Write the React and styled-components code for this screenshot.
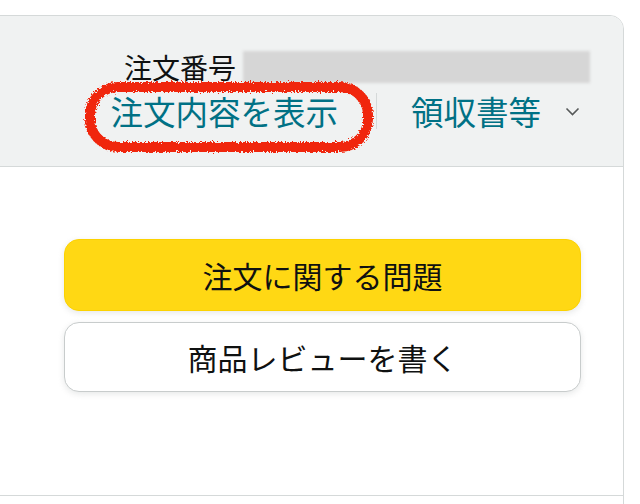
import React from "react";
import styled, { createGlobalStyle } from "styled-components";

const GlobalStyle = createGlobalStyle`
  body {
    margin: 0;
    background: #fff;
    font-family: "Noto Sans CJK JP", "Noto Sans", sans-serif;
    color: #0f1111;
  }
`;

const Page = styled.div`
  height: 504px;
  padding-top: 15px;
  box-sizing: border-box;
  overflow: hidden;
`;

const Card = styled.div`
  margin-left: -20px;
  width: 644px;
  box-sizing: border-box;
  border: 1px solid #d5d9d9;
  border-radius: 14px;
  overflow: hidden;
  background: #fff;
`;

const Header = styled.div`
  display: flex;
  flex-direction: column;
  align-items: flex-end;
  height: 151px;
  padding: 34px 33px 0 0;
  box-sizing: border-box;
  background: #f0f2f2;
  border-bottom: 1px solid #d5d9d9;
`;

const OrderRow = styled.div`
  display: flex;
  align-items: center;
  gap: 7px;
  height: 34px;
`;

const OrderLabel = styled.span`
  font-size: 28px;
  line-height: 34px;
  color: #0f1111;
`;

const Redacted = styled.div`
  width: 347px;
  height: 32px;
  background: #d6d6d6;
  filter: blur(1.5px);
`;

const LinkRow = styled.div`
  display: flex;
  align-items: center;
  height: 40px;
  margin-top: 7px;
  margin-right: 10px;
`;

const LinkWrap = styled.span`
  position: relative;
  display: inline-flex;
`;

const HeaderLink = styled.a`
  font-size: 32.5px;
  line-height: 40px;
  color: #007185;
  text-decoration: none;
  cursor: pointer;
`;

const Scribble = styled.svg`
  position: absolute;
  left: -25px;
  top: -9px;
  width: 290px;
  height: 72px;
  overflow: visible;
  pointer-events: none;
`;

const Divider = styled.span`
  width: 1px;
  height: 36px;
  background: #d5d9d9;
  margin: 0 34px 0 38px;
`;

const Chevron = styled.svg`
  width: 15px;
  height: 9px;
  margin-left: 24px;
`;

const Body = styled.div`
  display: flex;
  flex-direction: column;
  gap: 11px;
  height: 329px;
  padding: 72px 42px 0 83px;
  box-sizing: border-box;
  border-bottom: 1px solid #d5d9d9;
`;

const Button = styled.button`
  display: flex;
  align-items: center;
  justify-content: center;
  height: ${(p) => (p.$primary ? "72px" : "70px")};
  border-radius: 15px;
  border: 1px solid ${(p) => (p.$primary ? "#fcd200" : "#c8cccc")};
  background: ${(p) => (p.$primary ? "#ffd814" : "#fff")};
  box-shadow: 0 2px 6px rgba(213, 217, 217, 0.6);
  font-family: inherit;
  font-size: 30px;
  color: #0f1111;
  cursor: pointer;
`;

const NextSection = styled.div`
  height: 40px;
`;

export default function App() {
  return (
    <>
      <GlobalStyle />
      <Page>
        <Card>
          <Header>
            <OrderRow>
              <OrderLabel>注文番号</OrderLabel>
              <Redacted />
            </OrderRow>
            <LinkRow>
              <LinkWrap>
                <HeaderLink>注文内容を表示</HeaderLink>
                <Scribble viewBox="0 0 290 72">
                  <defs>
                    <filter id="rough" x="-10%" y="-20%" width="120%" height="140%">
                      <feTurbulence type="fractalNoise" baseFrequency="0.6" numOctaves="2" seed="3" />
                      <feDisplacementMap in="SourceGraphic" scale="6" />
                    </filter>
                  </defs>
                  <rect
                    x="5"
                    y="5"
                    width="278"
                    height="60"
                    rx="28"
                    fill="none"
                    stroke="#f0250a"
                    strokeWidth="10"
                    filter="url(#rough)"
                  />
                </Scribble>
              </LinkWrap>
              <Divider />
              <HeaderLink>領収書等</HeaderLink>
              <Chevron viewBox="0 0 15 9">
                <polyline
                  points="1.5,1.5 7.5,7.5 13.5,1.5"
                  fill="none"
                  stroke="#565959"
                  strokeWidth="1.6"
                />
              </Chevron>
            </LinkRow>
          </Header>
          <Body>
            <Button $primary>注文に関する問題</Button>
            <Button>商品レビューを書く</Button>
          </Body>
          <NextSection />
        </Card>
      </Page>
    </>
  );
}
